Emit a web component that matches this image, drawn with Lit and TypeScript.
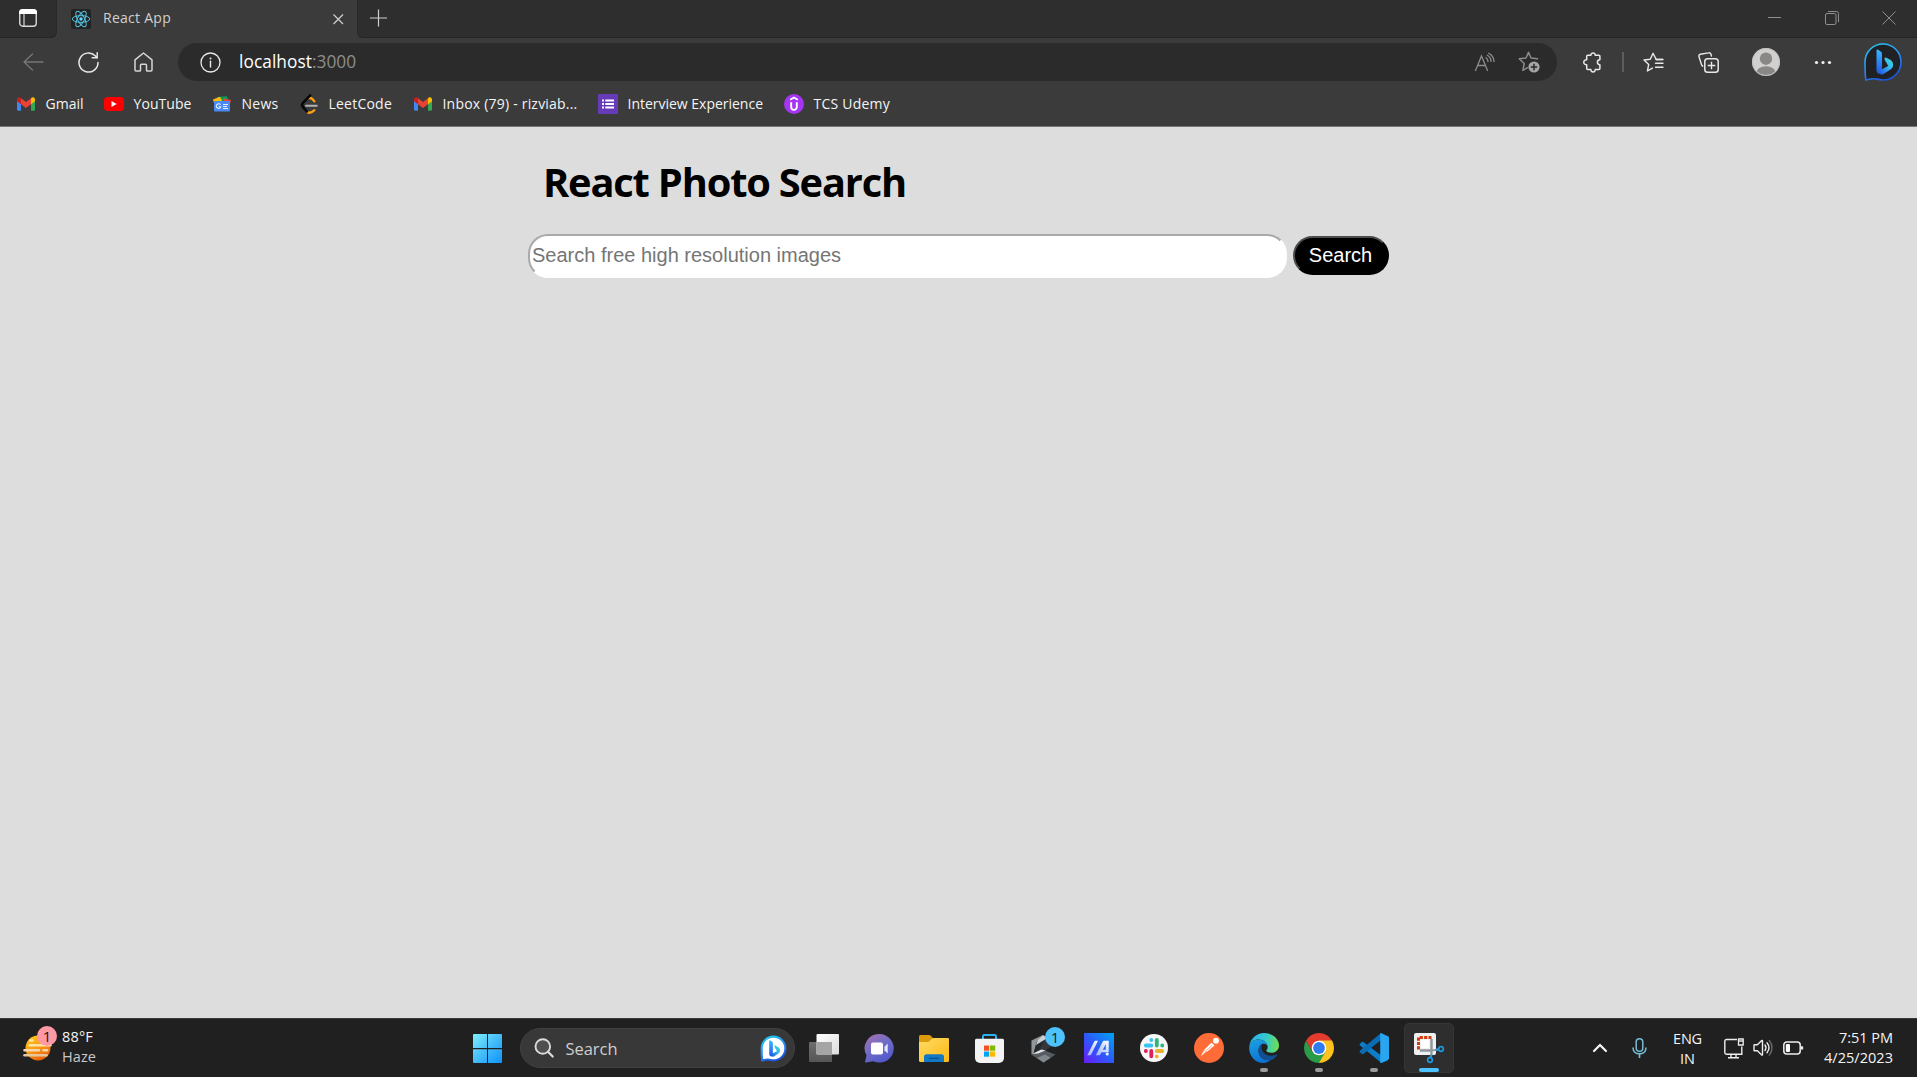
import { LitElement, html, css, svg } from "lit";
import { customElement, property } from "lit/decorators.js";

/** A single-line label whose tracking is adjusted so it fills a given width. */
@customElement("fit-text")
class FitText extends LitElement {
  @property({ type: Number }) w = 0;
  @property() text = "";
  static styles = css`
    :host { display: inline-block; white-space: pre; }
  `;
  render() {
    return html`<span>${this.text}</span>`;
  }
  firstUpdated() {
    const span = this.renderRoot.querySelector("span") as HTMLElement;
    const natural = span.getBoundingClientRect().width;
    const gap = (this.w - natural) / this.text.length;
    span.style.letterSpacing = `${gap.toFixed(3)}px`;
  }
}

const icon = (w: number, h: number, body: unknown) =>
  html`<svg class="ico" width=${w} height=${h} viewBox="0 0 ${w} ${h}" fill="none">${body}</svg>`;

const line = "#e8e8e8";

const gmail = icon(18, 14, svg`
  <path d="M0 3v9.6c0 .7.6 1.2 1.2 1.2H4V6.2z" fill="#4285f4"/>
  <path d="M14 6.200v7.600h2.800c.7 0 1.200-.5 1.200-1.200V3z" fill="#34a853"/>
  <path d="M14 1.400v5.800l4-3V2.400C18 .6 15.900-.4 14.500.7z" fill="#fbbc04"/>
  <path d="M4 7.200V1.300l5 3.800 5-3.800v5.900l-5 3.800z" fill="#ea4335"/>
  <path d="M0 2.400v1.800l4 3V1.300L3.500.7C2.100-.4 0 .6 0 2.400z" fill="#c5221f"/>`);

const youtube = icon(20, 14, svg`
  <rect width="20" height="14" rx="3.400" fill="#f00"/>
  <path d="M7.500 4v6l5.200-3z" fill="#fff"/>`);

const news = icon(18, 16, svg`
  <path d="M4 1 14 .2 16 6H4z" fill="#0c9d58"/>
  <path d="M0 3.500 7 .8l3 6H1z" fill="#fbbc04"/>
  <path d="M11 2.500 18 4l-1.500 6h-7z" fill="#ea4335"/>
  <rect x="1" y="5" width="16" height="10.500" rx="1" fill="#4a8af4"/>
  <path d="M7.500 8.800a2.300 2.300 0 1 0 .3 1.900H5.800M10 8.500h5M10 10.500h4M10 12.500h5" stroke="#e8f0ff" stroke-width="1.100"/>`);

const leetcode = icon(17, 20, svg`
  <path d="M5 11.800h10.800" stroke="#b3b3b3" stroke-width="1.900" stroke-linecap="round"/>
  <path d="M8 4.300c1.500-.7 2.300-.2 3.300.8l2 2.200M6.500 18.200c2.300 1.200 4.400.5 6.800-2" stroke="#ffa116" stroke-width="2.300" stroke-linecap="round"/>
  <path d="M9.200 1.300 2 8.900c-1.100 1.200-1.100 3.100 0 4.300l3.800 4.300" stroke="#070706" stroke-width="2.500" stroke-linecap="round"/>`);

const forms = icon(20, 20, svg`
  <rect width="20" height="20" rx="1" fill="#673ab7"/>
  <path d="M4 6.500h2M4 10h2M4 13.500h2M7.300 6.500H16M7.300 10H16M7.300 13.500H16" stroke="#fff" stroke-width="2"/>`);

const udemy = icon(20, 20, svg`
  <circle cx="10" cy="10" r="10" fill="#a435f0"/>
  <path d="M6.200 5.800 10 3.600l3.800 2.200" stroke="#fff" stroke-width="1.700"/>
  <path d="M7.200 8.200v4.800c0 3.800 5.600 3.800 5.600 0V8.200" stroke="#fff" stroke-width="1.900"/>`);

const bookmarks = [
  { icon: gmail, text: "Gmail", w: 38, cell: 88 },
  { icon: youtube, text: "YouTube", w: 58, cell: 108 },
  { icon: news, text: "News", w: 37, cell: 87 },
  { icon: leetcode, text: "LeetCode", w: 63.500, cell: 114 },
  { icon: gmail, text: "Inbox (79) - rizviab...", w: 135, cell: 185 },
  { icon: forms, text: "Interview Experience", w: 135.500, cell: 186 },
  { icon: udemy, text: "TCS Udemy", w: 76.500, cell: 110 },
];

const reactLogo = icon(20, 20, svg`
  <rect width="20" height="20" rx="2" fill="#232323"/>
  <g stroke="#53c1de" stroke-width="1">
    <ellipse cx="10" cy="10" rx="8.700" ry="3.400"/>
    <ellipse cx="10" cy="10" rx="8.700" ry="3.400" transform="rotate(60 10 10)"/>
    <ellipse cx="10" cy="10" rx="8.700" ry="3.400" transform="rotate(120 10 10)"/>
  </g>
  <circle cx="10" cy="10" r="1.700" fill="#61dafb"/>`);

const tabActions = icon(18, 18, svg`
  <rect x=".75" y=".75" width="16.500" height="16.500" rx="3" stroke="#d8d8d8" stroke-width="1.400"/>
  <path d="M0 5V3.500A3.500 3.500 0 0 1 3.500 0h11A3.500 3.500 0 0 1 18 3.500V5z" fill="#fff"/>
  <path d="M5 5v12" stroke="#d8d8d8" stroke-width="1.200"/>`);

const back = icon(21, 18, svg`<path d="M20 9H1M9.500 1 1 9l8.500 8" stroke="#777" stroke-width="1.300" stroke-linecap="round" stroke-linejoin="round"/>`);
const reload = icon(21, 21, svg`
  <path d="M20 10.500A9.500 9.500 0 1 1 17.200 3.800L19 5.600" stroke=${line} stroke-width="1.500" stroke-linecap="round"/>
  <path d="M19.200.8v5h-5" stroke=${line} stroke-width="1.500" stroke-linecap="round" stroke-linejoin="round"/>`);
const home = icon(19, 20, svg`<path d="M9.500 1 1 7.900V18c0 .6.400 1 1 1h3.700c.5 0 .8-.4.8-.8v-4.900c0-.6.400-1 1-1h4c.6 0 1 .4 1 1v4.900c0 .4.300.8.800.8H17c.6 0 1-.4 1-1V7.900z" stroke="#d6d6d6" stroke-width="1.500" stroke-linejoin="round"/>`);
const info = icon(21, 21, svg`
  <circle cx="10.500" cy="10.500" r="9.500" stroke=${line} stroke-width="1.300"/>
  <circle cx="10.500" cy="6.400" r="1" fill=${line}/>
  <path d="M10.500 9.300V15" stroke=${line} stroke-width="1.400" stroke-linecap="round"/>`);
const readAloud = icon(21, 19, svg`
  <g stroke="#8c8c8c" stroke-width="1.300" stroke-linecap="round">
    <path d="M1.500 17.500 7.500 3l6 14.500M3.700 12.500h7.600"/>
    <path d="M12 4.800c1.200.8 1.900 2 2 3.600M13.300 2.300c2.300 1.300 3.700 3.400 3.700 6.100M14.700.3c3.200 1.700 5.100 4.500 5.300 8.200"/>
  </g>`);
const starAdd = icon(22, 22, svg`
  <path d="M19.500 7.800 13 7 10.500 1.200 8 7l-6.800.8 5 4.700-1.300 6.800 4.600-2.600" stroke="#8c8c8c" stroke-width="1.500" stroke-linejoin="round" stroke-linecap="round"/>
  <circle cx="16" cy="16" r="5.600" fill="#a5a5a5"/>
  <path d="M16 12.800v6.400M12.800 16h6.400" stroke="#2b2b2b" stroke-width="1.500"/>`);
const puzzle = icon(20, 21, svg`
  <path d="M5.700 3.300h3.200c-.2-3.100 4.500-3.100 4.300 0h3.700c.6 0 1 .4 1 1v3.400c-3.300.1-3.300 4.800 0 5v3.900c0 .6-.4 1-1 1h-3.700c.2 3.200-4.500 3.200-4.300 0H5.700c-.6 0-1-.4-1-1v-3.800c-3.900.1-3.900-5.100 0-5V4.300c0-.6.4-1 1-1z" stroke=${line} stroke-width="1.500" stroke-linejoin="round"/>`);
const favorites = icon(21, 21, svg`
  <path d="M19.500 7.500h-6.200L10 1.300 7.300 7.200 1 8l4.700 4.500L4.400 19l5-2.900" stroke=${line} stroke-width="1.400" stroke-linejoin="round" stroke-linecap="round"/>
  <path d="M13 7.500h7M12.500 11.300H20M12.500 15.200H20" stroke=${line} stroke-width="1.400" stroke-linecap="round"/>`);
const collections = icon(21, 21, svg`
  <path d="M4.700 14.300 3.600 13 1 4.700c-.4-1.200.2-2.200 1.300-2.500L10.500.9c1.100-.3 2 .2 2.400 1.200L13.500 4" stroke=${line} stroke-width="1.400" stroke-linecap="round"/>
  <rect x="6.800" y="6.800" width="13.400" height="13.400" rx="2.800" stroke=${line} stroke-width="1.500"/>
  <path d="M13.500 9.700v7.600M9.700 13.500h7.600" stroke=${line} stroke-width="1.400"/>`);
const avatar = icon(28, 28, svg`
  <clipPath id="av"><circle cx="14" cy="14" r="14"/></clipPath>
  <circle cx="14" cy="14" r="14" fill="#d2d0ce"/>
  <g clip-path="url(#av)" fill="#8a8886"><circle cx="14" cy="10.700" r="6.200"/><ellipse cx="14" cy="25" rx="9.800" ry="6.800"/></g>
  <circle cx="14" cy="14" r="13.500" stroke="#c4c2c0"/>`);
const more = icon(18, 5, svg`<g fill="#f2f2f2"><circle cx="2.500" cy="2.500" r="1.600"/><circle cx="9" cy="2.500" r="1.600"/><circle cx="15.500" cy="2.500" r="1.600"/></g>`);

const bing = (size: number, fill: string, id: string) => html`
  <svg class="ico" width=${size} height=${size} viewBox="0 0 38 38" fill="none">
    <linearGradient id=${id + "r"} x1="8" y1="2" x2="24" y2="38" gradientUnits="userSpaceOnUse">
      <stop stop-color="#22c5f0"/><stop offset=".5" stop-color="#2b8cf5"/><stop offset="1" stop-color="#1b50e0"/>
    </linearGradient>
    <linearGradient id=${id + "b"} x1="0" y1="0" x2="0" y2="1">
      <stop stop-color="#35b8ff"/><stop offset="1" stop-color="#2255e8"/>
    </linearGradient>
    <linearGradient id=${id + "c"} x1="0" y1="1" x2="1" y2="0">
      <stop stop-color="#1d49dd"/><stop offset=".6" stop-color="#38b9ee"/><stop offset="1" stop-color="#35e0d0"/>
    </linearGradient>
    <path d="M19 1a18 18 0 1 1 0 36c-3 0-5.500-1.300-8.500-1.300-3 0-5.500.5-8.700 1.400C1.300 33 1 27 1 19A18 18 0 0 1 19 1z" fill=${fill} stroke=${`url(#${id}r)`} stroke-width=${size > 30 ? 1.6 : 3.2}/>
    <path d="M12.500 7.500c0-1 1-1.200 1.700-.7l2.800 2c.7.500 1 1.100 1 2v16.500L15 31c-1.700-.7-2.500-2-2.500-4z" fill=${`url(#${id}b)`}/>
    <path d="M20.500 15.300c0-.8.600-1 1.300-.7l4 2c2.200 1.200 3.300 3 3.300 5.200 0 2.500-1.200 3.800-3 5L19.600 31c-2.700 1.300-5.300-.5-5.600-3l4-1.700 6.200-3.200-1.500-2.800c-.8-1.500-2.200-3-2.200-5z" fill=${`url(#${id}c)`}/>
  </svg>`;

const minimize = icon(13, 13, svg`<path d="M0 6.500h13" stroke="#8f8f8f"/>`);
const restore = icon(14, 14, svg`<rect x=".5" y="2.500" width="10.500" height="11" rx="1.500" stroke="#8f8f8f"/><path d="M3 .5h8.500a2 2 0 0 1 2 2V11" stroke="#8f8f8f"/>`);
const closeWin = icon(14, 14, svg`<path d="m.5.500 13 13M13.500.500l-13 13" stroke="#8f8f8f"/>`);
const closeTab = icon(12, 12, svg`<path d="m1.500 1.500 9.500 9.500M11 1.500 1.500 11" stroke="#d0d0d0" stroke-width="1.200"/>`);
const plus = icon(18, 18, svg`<path d="M8.500.5v17M0 9h17" stroke="#cfcfcf" stroke-width="1.200"/>`);

/* Taskbar */
const weather = icon(31, 28, svg`
  <linearGradient id="sun" x1="8" y1="2" x2="20" y2="27" gradientUnits="userSpaceOnUse"><stop stop-color="#ffc61a"/><stop offset=".5" stop-color="#fb9a14"/><stop offset="1" stop-color="#e8590c"/></linearGradient>
  <circle cx="16" cy="14" r="12.500" fill="url(#sun)"/>
  <g stroke-width="2.600" stroke-linecap="round">
    <path d="M8 6.500h2.500M7.500 11.300h21" stroke="#ffe3a8"/>
    <path d="M2.500 16.300H17M21.500 16.300H25" stroke="#f3d9b0"/>
    <path d="M2.500 21.300H24.500" stroke="#e6c79c"/>
  </g>`);
const windows = icon(29, 29, svg`
  <linearGradient id="w" x1="0" y1="0" x2="29" y2="29" gradientUnits="userSpaceOnUse"><stop stop-color="#7ff0fd"/><stop offset=".5" stop-color="#45bdf8"/><stop offset="1" stop-color="#0d93fb"/></linearGradient>
  <path d="M1 0h13v14H0V1a1 1 0 0 1 1-1zM15 0h13a1 1 0 0 1 1 1v13H15zM0 15.200h14V29H1a1 1 0 0 1-1-1zM15 15.200h14V28a1 1 0 0 1-1 1H15z" fill="url(#w)"/>`);
const magnifier = icon(20, 20, svg`
  <circle cx="8.800" cy="8.500" r="7.300" fill="#505050" stroke="#dcdcdc" stroke-width="1.900"/>
  <path d="m14 13.700 4.700 4.800" stroke="#dcdcdc" stroke-width="2.200" stroke-linecap="round"/>`);
const taskView = icon(30, 28, svg`
  <linearGradient id="tv" x1="0" y1="0" x2="1" y2="1"><stop stop-color="#fff"/><stop offset="1" stop-color="#dcdcdc"/></linearGradient>
  <linearGradient id="tb" x1="0" y1="0" x2="0" y2="1"><stop stop-color="#6e6e6e"/><stop offset="1" stop-color="#565656"/></linearGradient>
  <rect y="8" width="23" height="20" rx="1" fill="url(#tb)"/>
  <rect x="7.500" width="22.500" height="20.500" rx="1" fill="url(#tv)"/>
  <path d="M7.500 8H23v12.500H8.500a1 1 0 0 1-1-1z" fill="#a5a5a5"/>`);
const chat = icon(29, 29, svg`
  <linearGradient id="ch" x1="4" y1="3" x2="20" y2="29" gradientUnits="userSpaceOnUse"><stop stop-color="#9b6fb4"/><stop offset=".45" stop-color="#6e6cc8"/><stop offset="1" stop-color="#5156cb"/></linearGradient>
  <path d="M14.500 0a14.300 14.300 0 1 1-6.200 27.200L1 28.500c-.8.100-1.100-.4-.9-1l1.500-6A14.300 14.300 0 0 1 14.500 0z" fill="url(#ch)"/>
  <rect x="6" y="8.500" width="12" height="12" rx="2" fill="#fff"/>
  <path d="M19.500 12.800 22.700 9.500V19.500L19.500 16.200z" fill="#e6e4ff"/>`);
const folder = icon(30, 28, svg`
  <linearGradient id="fo" x1="0" y1="0" x2="1" y2="1"><stop stop-color="#ffdc67"/><stop offset="1" stop-color="#fdb913"/></linearGradient>
  <path d="M0 2.500A1.500 1.500 0 0 1 1.500 1H10c.7 0 1 .2 1.500.6L14 4 11 10H0z" fill="#dd9a09"/>
  <path d="M0 8h8.500c.8 0 1.300-.3 1.800-.8l3-2.700c.4-.4.900-.6 1.500-.6h14c.7 0 1.200.5 1.200 1.200V26.500c0 .8-.5 1.500-1.500 1.500H1.500C.6 28 0 27.400 0 26.500z" fill="url(#fo)"/>
  <path d="M5 28v-5.200c0-1.500 1-2.500 2.500-2.500h15c1.500 0 2.500 1 2.500 2.500V28z" fill="#1078c4"/>
  <path d="M10.500 24.300h9" stroke="#0a4f8c" stroke-width="1.300" stroke-linecap="round"/>`);
const store = icon(29, 29, svg`
  <path d="M8 5V2.300C8 1.300 8.500 1 9.300 1h10.400c.8 0 1.300.3 1.300 1.300V5" stroke="#2ab4ee" stroke-width="2"/>
  <path d="M1.500 4.700h26c.8 0 1.500.6 1.500 1.500V24a5 5 0 0 1-5 5H5a5 5 0 0 1-5-5V6.200c0-.9.7-1.500 1.500-1.500z" fill="#f3f3f3"/>
  <path d="M9 11.500h5.200v5.200H9z" fill="#f25022"/><path d="M15 11.500h5.200v5.200H15z" fill="#7fba00"/>
  <path d="M9 17.500h5.200v5.200H9z" fill="#00a4ef"/><path d="M15 17.500h5.200v5.200H15z" fill="#ffb900"/>`);
const armoury = icon(30, 29, svg`
  <path d="M14 1 26.500 6v14.500L14.500 28.500 2.500 21V6.500z" fill="#33363a"/>
  <path d="M14 1 7.500 8.500 4.500 19 2.500 20.500V6.500z" fill="#8f969c"/>
  <path d="M14 1 18.500 4 7 11 9 6z" fill="#c9cfd4"/>
  <path d="M7 11.500 15 6.500 11 15 5 18.500z" fill="#26282b"/>
  <path d="M2.500 20.500 16 16.500l10.500 4-12 8z" fill="#565c62"/>
  <path d="M14.500 28.500 8 24l8-3.500 5.500 3.300z" fill="#80878d"/>
  <path d="M16.500 16.500 26.500 20.500V10z" fill="#1f2123"/>
  <path d="m3 20 9.500-4.500 4 1-7.500 3z" fill="#e2e6e9"/>`);
const myAsus = icon(30, 30, svg`
  <linearGradient id="ma" x1="0" y1="30" x2="30" y2="0" gradientUnits="userSpaceOnUse"><stop stop-color="#6a1bf5"/><stop offset=".5" stop-color="#2b5cfa"/><stop offset="1" stop-color="#00a5f5"/></linearGradient>
  <linearGradient id="mb" x1="0" y1="1" x2="1" y2="0"><stop stop-color="#9ab0ff"/><stop offset="1" stop-color="#fff"/></linearGradient>
  <rect width="30" height="30" fill="url(#ma)"/>
  <path d="M3.300 22.300 10 9c.5-.9 1-1.200 2-1.200h2L7.500 20.800c-.5 1-1 1.500-2 1.500z" fill="url(#mb)"/>
  <path d="M11.800 22.300 18.500 9c.5-.9 1-1.200 2-1.200h4.200v11.500h-7.200l-.8 1.500c-.5 1-1 1.500-2 1.500zM18.800 16.800h3V11z" fill="url(#mb)" fill-rule="evenodd"/>
  <circle cx="23.200" cy="21" r="1.600" fill="#eaf2ff"/>`);
const slack = icon(28, 28, svg`
  <circle cx="14" cy="14" r="14" fill="#f7f7f7"/>
  <g stroke-width="3.800" stroke-linecap="round">
    <path d="M11.300 6v.1M5.800 11.500h5.500" stroke="#36c5f0"/>
    <path d="M16.800 6v5.500M22.200 11.500h.1" stroke="#2eb67d"/>
    <path d="M16.800 17h5.500M16.800 22.300v.1" stroke="#ecb22e"/>
    <path d="M5.800 17h.1M11.300 17v5.300" stroke="#e01e5a"/>
  </g>`);
const postman = icon(30, 30, svg`
  <circle cx="15" cy="15" r="15" fill="#ff6c37"/>
  <circle cx="22" cy="7.700" r="2.900" fill="#fff"/>
  <path d="m17.500 9.500 3 3-7.500 6.300-3-1.800z" fill="#fff"/>
  <path d="m10 17 2.500 1.500L7 23.200l.7-1.900z" fill="#ffe5db"/>
  <path d="m18.300 12.300-6 5" stroke="#ff6c37" stroke-width=".6"/>`);
const edge = icon(30, 30, svg`
  <linearGradient id="e1" x1="2" y1="8" x2="30" y2="12" gradientUnits="userSpaceOnUse"><stop stop-color="#2bb3ec"/><stop offset=".5" stop-color="#34c9cf"/><stop offset="1" stop-color="#6de04c"/></linearGradient>
  <linearGradient id="e2" x1="4" y1="8" x2="14" y2="30" gradientUnits="userSpaceOnUse"><stop stop-color="#1b9de2"/><stop offset="1" stop-color="#0b6fd0"/></linearGradient>
  <path d="M.3 13C1.400 5.600 7.500 0 15 0c9 0 15 6.500 15 12.500 0 4.500-3.500 7.300-7.500 7.300-3.700 0-5.300-1.200-5.300-2.200 0-.7 1.500-1.300 1.500-3.300C18.700 10 14.500 6.500 9.500 6.500 5 6.500 1.500 9 .3 13z" fill="url(#e1)"/>
  <path d="M.3 13C1.500 9 5 6.500 9.500 6.500c4.800 0 8.500 3 9.200 6.500-1-1.500-2.500-2.200-4-2.200-3 0-5.200 3.200-5.200 6.700 0 6 4.500 9.500 9.500 9.500 1.300 0 2-.2 3-.4-2 2-4.600 3.400-7.500 3.400C6 30-.8 22.500.3 13z" fill="url(#e2)"/>
  <path d="M12 11.700c-1.500 1.200-2.500 3.300-2.500 5.800C9.500 23.500 14 27.500 19.500 27.500c4 0 7-2.500 8.500-5.200.3-.6-.2-1-.8-.7-1.200.6-2.700 1.200-5 1.200-5.500 0-9.700-3.800-9.700-8.300 0-1 .1-2 .5-2.800z" fill="#124f92"/>`);
const chrome = icon(30, 30, svg`
  <path d="M15 15 2.010 7.500A15 15 0 0 1 27.990 7.500z" fill="#e33b2e"/>
  <path d="M15 15V7.500H27.990A15 15 0 0 1 15 30z" fill="#fcc31e"/>
  <path d="M15 30A15 15 0 0 1 2.010 7.500L8.500 18.700 15 22l6.500-3.300z" fill="#2a9b48"/>
  <path d="M2.010 7.500 8.500 18.700 15 7.500z" fill="#e33b2e"/>
  <circle cx="15" cy="15" r="7.300" fill="#fff"/><circle cx="15" cy="15" r="5.900" fill="#2f7cf0"/>`);
const vscode = icon(30, 30, svg`
  <path d="m.8 11 2-1.900c.5-.4 1-.4 1.500 0L29 27.500 22.500 30 .8 12.300c-.4-.4-.4-.9 0-1.300z" fill="#0b7dcb"/>
  <path d="m.8 19 2 1.900c.5.400 1 .4 1.500 0L24 5.500 22 0 .8 17.700c-.4.400-.4.900 0 1.300z" fill="#0a6cb5"/>
  <path d="M22 0 29 3.200c.6.300 1 .8 1 1.500v20.600c0 .7-.4 1.200-1 1.500L22 30c-.8-.2-.8-.8-.8-1.500v-27C21.200.8 21.400.2 22 0z" fill="#2aa5f0"/>`);
const snip = icon(30, 30, svg`
  <rect width="22" height="22" rx="2" fill="#eef0f2"/>
  <path d="M4.500 16.500v-12h13" stroke="#d63b0c" stroke-width="3" stroke-dasharray="3.200 1.200"/>
  <path d="M7 7h8v8H7z" fill="#fff"/>
  <path d="M17.500 6v12M6 17.500h12" stroke="#8f979e" stroke-width="2.400"/>
  <path d="m17.500 17.500 3.500-.5 4-1M17.500 17.500V21l-1 3.500" stroke="#8f979e" stroke-width="2.200"/>
  <circle cx="27" cy="16" r="2.300" stroke="#1b98e0" stroke-width="1.700"/>
  <circle cx="16" cy="27" r="2.300" stroke="#1b98e0" stroke-width="1.700"/>
  <path d="m24.700 16.500-3 1M16.500 24.500l1-3" stroke="#1b98e0" stroke-width="1.700"/>`);

const chevron = icon(16, 10, svg`<path d="m2 8 6-6 6 6" stroke="#f5f5f5" stroke-width="2.200" stroke-linecap="round" stroke-linejoin="round"/>`);
const mic = icon(15, 20, svg`
  <rect x="4.200" y=".8" width="6.600" height="12.400" rx="3.300" stroke="#76bcd6" stroke-width="1.500"/>
  <path d="M1 9.500c0 8.500 13 8.500 13 0M7.500 16v4" stroke="#76bcd6" stroke-width="1.600"/>`);
const network = icon(20, 21, svg`
  <path d="M13 1.500H2.500A1.700 1.700 0 0 0 .8 3.200V14.500c0 .9.700 1.700 1.700 1.700h15.300V8.500" stroke="#ededed" stroke-width="1.400"/>
  <path d="M4 19.700h11M7 16v3.500M12 16v3.500" stroke="#ededed" stroke-width="1.400"/>
  <path d="M14.500 1h4.700v6h-4.700z" fill="#202020" stroke="#ededed" stroke-width="1.300"/><path d="M14.500 3h4.700" stroke="#ededed" stroke-width="1.400"/>`);
const speaker = icon(21, 18, svg`
  <path d="M1 6.300c0-.4.300-.6.600-.6h2.800L8.700 1.600c.4-.3.800-.1.800.4v13.500c0 .5-.4.700-.8.400L4.400 11.800H1.600c-.3 0-.6-.2-.6-.6z" stroke="#ededed" stroke-width="1.400" stroke-linejoin="round"/>
  <path d="M12 6c1.200 1.700 1.200 3.900 0 5.500M14 3.800c2.300 2.900 2.300 7 0 10" stroke="#ededed" stroke-width="1.400" stroke-linecap="round"/>
  <path d="M16.300 1.500c3.600 4.300 3.600 10.300 0 14.600" stroke="#6a6a6a" stroke-width="1.400" stroke-linecap="round"/>`);
const battery = icon(21, 14, svg`
  <rect x=".8" y=".9" width="16.400" height="12" rx="3" stroke="#ededed" stroke-width="1.500"/>
  <rect x="2.800" y="3" width="4.200" height="8" rx="1" fill="#fff"/>
  <path d="M18 5.200h1.300c.5 0 .9.400.9.900v1.600c0 .5-.4.900-.9.900H18z" fill="#ededed"/>`);

const apps = [
  { icon: taskView }, { icon: chat }, { icon: folder }, { icon: store },
  { icon: armoury, badge: true }, { icon: myAsus }, { icon: slack }, { icon: postman },
  { icon: edge, run: "run" }, { icon: chrome, run: "run" }, { icon: vscode, run: "run" },
  { icon: snip, run: "current" },
] as { icon: unknown; badge?: boolean; run?: string }[];

@customElement("app-root")
class AppRoot extends LitElement {
  static styles = css`
    :host {
      display: flex; flex-direction: column; width: 100vw; height: 100vh; overflow: hidden;
      background: #ddd; font-family: "Open Sans", "Noto Sans", sans-serif; font-size: 14px; color: #f4f4f4;
    }
    * { box-sizing: border-box; }
    .ico { display: block; flex: none; overflow: visible; }
    .titlebar { display: flex; flex: none; height: 38px; background: #3b3b3b; }
    .strip { background: #2e2e2e; height: 38px; border-bottom: 1px solid #252525; display: flex; align-items: center; }
    .strip.left { width: 57px; padding: 0 0 1px 19px; border-bottom-right-radius: 6px; border-right: 1px solid #292929; }
    .strip.right { flex: 1; border-bottom-left-radius: 6px; border-left: 1px solid #292929; padding: 0 21px 2px 12px; }
    .tab { width: 300px; display: flex; align-items: center; padding: 0 13px 1px 14px; color: #cfcfcf; }
    .tab fit-text { margin-left: 12px; line-height: 20px; margin-bottom: 1px; }
    .push { margin-left: auto; }
    .wincell { width: 57.500px; display: flex; justify-content: center; }
    .wincell:last-child { width: auto; margin-left: 21px; }
    .toolbar { display: flex; flex: none; height: 48px; align-items: center; padding-left: 5.500px; }
    .cell { width: 55px; display: flex; justify-content: center; flex: none; }
    .chrome { background: #3b3b3b; height: 89px; flex: none; border-bottom: 1px solid #777476; }
    .address {
      margin-left: 7.500px; width: 1379px; height: 38px; border-radius: 19px; background: #2b2b2b; flex: none;
      display: flex; align-items: center; padding: 0 17px 0 22px; font-size: 17.300px;
    }
    .address .host { margin: 0 0 2px 18px; color: #fff; }
    .address .port { margin-bottom: 2px; color: #8d8d8d; }
    .address .star { margin-left: 23px; }
    .first { margin-left: 7.500px; }
    .sep { width: 2px; height: 20px; background: #5d5d5d; margin: 0 2px; }
    .cell.avatar { width: 61px; }
    .cell.more { width: 53px; }
    .cell.bing { width: 67px; }
    .bookmarks { display: flex; height: 36px; align-items: center; padding: 0 0 0 16px; }
    .bookmark { display: flex; align-items: center; flex: none; }
    .bookmark .pic { width: 20px; display: flex; justify-content: center; margin-right: 9.500px; }
    .bookmark fit-text { line-height: 20px; }
    .page { flex: 1; color: #000; padding-left: 528px; }
    h1 { margin: 25px 0 0 15px; font-size: 39.800px; line-height: 60px; font-weight: 700; height: 60px; }
    form { display: flex; align-items: center; margin-top: 22px; gap: 6px; }
    input {
      width: 759px; height: 44px; border-radius: 20px; border: 2px solid; border-color: #a9a9a9 #fff #fff #a9a9a9;
      padding: 1px 2px 3px; font: 20px "Liberation Sans", Arial, sans-serif; background: #fff; outline: 0;
    }
    input::placeholder { color: #757575; opacity: 1; }
    .go {
      width: 96px; height: 39px; border-radius: 20px; background: #000; color: #fff; padding: 0 1px 1px 0;
      border: 2px solid; border-color: #4c4c4c #000 #000 #4c4c4c; font: 20px "Liberation Sans", Arial, sans-serif; margin-bottom: 1px;
    }
    .taskbar { flex: none; height: 59px; background: #202020; border-top: 1px solid #3a3a3a; display: flex; font-size: 14.500px; }
    .weather { display: flex; width: 460px; padding: 8px 0 0 22px; }
    .weather .pic { position: relative; width: 40px; padding-top: 7px; }
    .badge {
      position: absolute; width: 20px; height: 20px; border-radius: 10px; font-size: 15px; line-height: 20px; text-align: center;
      color: #1a1a1a;
    }
    .weather .badge { background: #ff99a4; left: 15px; top: -1px; }
    .lines { line-height: 20px; display: flex; flex-direction: column; }
    .dim { color: #c8c8c8; }
    .centre { display: flex; align-items: center; padding-left: 13px; }
    .find {
      margin: 0 2px 0 17.500px; width: 275px; height: 40px; border-radius: 20px; background: #383838; border: 1px solid #404040;
      display: flex; align-items: center; padding: 0 8px 0 13px; color: #cfcfcf; font-size: 16.500px;
    }
    .find fit-text { margin-left: 12px; }
    .app { position: relative; width: 50px; height: 50px; margin: 0 2.500px; border-radius: 5px; display: flex; align-items: center; justify-content: center; }
    .app.current { background: #2e2e2e; border: 1px solid #363636; }
    .app .badge { background: #4cc2ff; left: 26px; top: 4px; }
    .mark { position: absolute; height: 4px; border-radius: 2px; }
    .run .mark { width: 8px; background: #9a9a9a; bottom: 1px; }
    .current .mark { width: 20px; background: #4cc2ff; bottom: 0; }
    .tray { margin-left: auto; display: flex; align-items: center; padding-right: 24px; }
    .lang { width: 29px; align-items: center; margin: 2px 22px 0 26px; }
    .mic { margin-left: 24px; }
    .spk { margin: 0 9px; }
    .clock { align-items: flex-end; width: 89px; }
  `;

  render() {
    return html`
      <div class="titlebar">
        <div class="strip left">${tabActions}</div>
        <div class="tab">${reactLogo}<fit-text w="68" text="React App"></fit-text><span class="push">${closeTab}</span></div>
        <div class="strip right">
          ${plus}
          <div class="wincell push">${minimize}</div>
          <div class="wincell">${restore}</div>
          <div class="wincell">${closeWin}</div>
        </div>
      </div>
      <div class="chrome">
        <div class="toolbar">
          <div class="cell">${back}</div>
          <div class="cell">${reload}</div>
          <div class="cell">${home}</div>
          <div class="address">
            ${info}<fit-text class="host" w="73" text="localhost"></fit-text><fit-text class="port" w="44" text=":3000"></fit-text>
            <span class="push">${readAloud}</span><span class="star">${starAdd}</span>
          </div>
          <div class="cell first">${puzzle}</div>
          <div class="sep"></div>
          <div class="cell">${favorites}</div>
          <div class="cell">${collections}</div>
          <div class="cell avatar">${avatar}</div>
          <div class="cell more">${more}</div>
          <div class="cell bing">${bing(38, "#202124", "x")}</div>
        </div>
        <div class="bookmarks">
          ${bookmarks.map((b) => html`<div class="bookmark" style="width:${b.cell}px"><span class="pic">${b.icon}</span><fit-text w=${b.w} text=${b.text}></fit-text></div>`)}
        </div>
      </div>
      <div class="page">
        <h1><fit-text w="363" text="React Photo Search"></fit-text></h1>
        <form @submit=${(e: Event) => e.preventDefault()}>
          <input type="text" placeholder="Search free high resolution images" />
          <button class="go">Search</button>
        </form>
      </div>
      <div class="taskbar">
        <div class="weather">
          <div class="pic">${weather}<span class="badge">1</span></div>
          <div class="lines"><fit-text w="31" text="88°F"></fit-text><fit-text class="dim" w="34" text="Haze"></fit-text></div>
        </div>
        <div class="centre">
          ${windows}
          <div class="find">${magnifier}<fit-text w="52" text="Search"></fit-text><span class="push">${bing(25, "#fff", "y")}</span></div>
          ${apps.map((a) => html`<div class="app ${a.run ?? ""}">${a.icon}${a.badge ? html`<span class="badge">1</span>` : ""}${a.run ? html`<span class="mark"></span>` : ""}</div>`)}
        </div>
        <div class="tray">
          ${chevron}<span class="mic">${mic}</span>
          <div class="lines lang"><fit-text w="29" text="ENG"></fit-text><fit-text w="15" text="IN"></fit-text></div>
          ${network}<span class="spk">${speaker}</span>${battery}
          <div class="lines clock"><fit-text w="54" text="7:51 PM"></fit-text><fit-text w="69" text="4/25/2023"></fit-text></div>
        </div>
      </div>
    `;
  }
}
